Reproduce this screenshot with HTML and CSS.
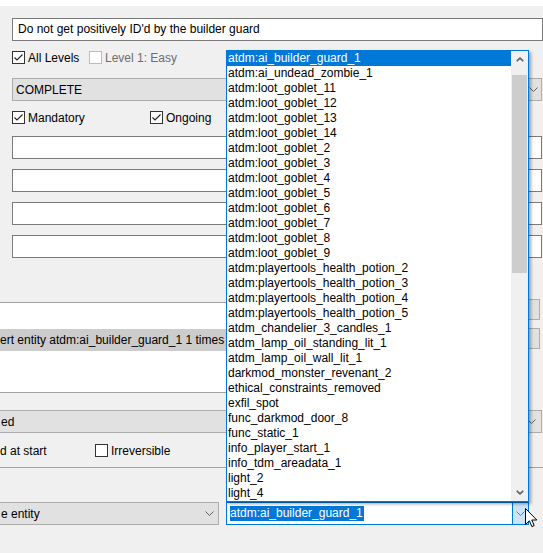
FILE: index.html
```html
<!DOCTYPE html>
<html>
<head>
<meta charset="utf-8">
<link rel="stylesheet" href="styles.css">
</head>
<body>
<div class="page">
  <div class="topbar"></div>
  <div class="upper">
    <div class="textinput">Do not get positively ID'd by the builder guard</div>
    <div class="row r1">
      <div class="chk w-all"><span class="box"><svg viewBox="0 0 13 13" width="13" height="13"><path d="M2.5 6.5 L5 9 L10.5 3.5" fill="none" stroke="#222" stroke-width="1.1"/></svg></span><span class="lbl">All Levels</span></div>
      <div class="chk disabled"><span class="box"></span><span class="lbl">Level 1: Easy</span></div>
    </div>
    <div class="combo c-complete"><span class="ctext">COMPLETE</span><svg class="chev" viewBox="0 0 9 5" width="9" height="5"><path d="M0.5 0.5 L4.5 4.5 L8.5 0.5" fill="none" stroke="#606060" stroke-width="1"/></svg></div>
    <div class="row r2">
      <div class="chk w-mand"><span class="box"><svg viewBox="0 0 13 13" width="13" height="13"><path d="M2.5 6.5 L5 9 L10.5 3.5" fill="none" stroke="#222" stroke-width="1.1"/></svg></span><span class="lbl">Mandatory</span></div>
      <div class="chk"><span class="box"><svg viewBox="0 0 13 13" width="13" height="13"><path d="M2.5 6.5 L5 9 L10.5 3.5" fill="none" stroke="#222" stroke-width="1.1"/></svg></span><span class="lbl">Ongoing</span></div>
    </div>
    <div class="fields">
      <div class="field"></div>
      <div class="field"></div>
      <div class="field"></div>
      <div class="field"></div>
    </div>
  </div>
  <div class="lower">
    <div class="listrow">
      <div class="listview">
        <div class="lv-head"></div>
        <div class="lv-row sel"><span class="lv-cell">ert entity atdm:ai_builder_guard_1 1 times</span></div>
      </div>
      <div class="sidebtns">
        <div class="sbtn"></div>
        <div class="sbtn"></div>
      </div>
    </div>
    <div class="combo c-type"><span class="ctext">ed</span><svg class="chev" viewBox="0 0 9 5" width="9" height="5"><path d="M0.5 0.5 L4.5 4.5 L8.5 0.5" fill="none" stroke="#606060" stroke-width="1"/></svg></div>
    <div class="row r3">
      <span class="lbl w-sat">d at start</span>
      <div class="chk"><span class="box"></span><span class="lbl">Irreversible</span></div>
    </div>
    <div class="sep"></div>
    <div class="row r4">
      <div class="combo c-spec"><span class="ctext">e entity</span><svg class="chev" viewBox="0 0 9 5" width="9" height="5"><path d="M0.5 0.5 L4.5 4.5 L8.5 0.5" fill="none" stroke="#606060" stroke-width="1"/></svg></div>
      <div class="editcombo">
        <span class="edtext"><span class="hl">atdm:ai_builder_guard_1</span></span>
        <span class="dbtn"><svg viewBox="0 0 9 5" width="9" height="5"><path d="M0.5 0.5 L4.5 4.5 L8.5 0.5" fill="none" stroke="#707880" stroke-width="1"/></svg></span>
      </div>
    </div>
  </div>

  <div class="droplist">
    <div class="items">
      <div class="item sel">atdm:ai_builder_guard_1</div>
      <div class="item">atdm:ai_undead_zombie_1</div>
      <div class="item">atdm:loot_goblet_11</div>
      <div class="item">atdm:loot_goblet_12</div>
      <div class="item">atdm:loot_goblet_13</div>
      <div class="item">atdm:loot_goblet_14</div>
      <div class="item">atdm:loot_goblet_2</div>
      <div class="item">atdm:loot_goblet_3</div>
      <div class="item">atdm:loot_goblet_4</div>
      <div class="item">atdm:loot_goblet_5</div>
      <div class="item">atdm:loot_goblet_6</div>
      <div class="item">atdm:loot_goblet_7</div>
      <div class="item">atdm:loot_goblet_8</div>
      <div class="item">atdm:loot_goblet_9</div>
      <div class="item">atdm:playertools_health_potion_2</div>
      <div class="item">atdm:playertools_health_potion_3</div>
      <div class="item">atdm:playertools_health_potion_4</div>
      <div class="item">atdm:playertools_health_potion_5</div>
      <div class="item">atdm_chandelier_3_candles_1</div>
      <div class="item">atdm_lamp_oil_standing_lit_1</div>
      <div class="item">atdm_lamp_oil_wall_lit_1</div>
      <div class="item">darkmod_monster_revenant_2</div>
      <div class="item">ethical_constraints_removed</div>
      <div class="item">exfil_spot</div>
      <div class="item">func_darkmod_door_8</div>
      <div class="item">func_static_1</div>
      <div class="item">info_player_start_1</div>
      <div class="item">info_tdm_areadata_1</div>
      <div class="item">light_2</div>
      <div class="item">light_4</div>
    </div>
    <div class="vscroll">
      <div class="arrow up"><svg viewBox="0 0 8 5" width="8" height="5"><path d="M0.8 4.2 L4 1.2 L7.2 4.2" fill="none" stroke="#606060" stroke-width="1.6"/></svg></div>
      <div class="track"><div class="thumb"></div></div>
      <div class="arrow down"><svg viewBox="0 0 8 5" width="8" height="5"><path d="M0.8 0.8 L4 3.8 L7.2 0.8" fill="none" stroke="#606060" stroke-width="1.6"/></svg></div>
    </div>
  </div>

  <svg class="cursor" viewBox="0 0 13 21" width="13" height="21"><path d="M0.5 0.5 L0.5 16.5 L4.4 12.8 L6.9 18.6 L9.2 17.6 L6.8 12 L11.8 12 Z" fill="#fff" stroke="#000" stroke-width="1" stroke-linejoin="miter"/></svg>
</div>
</body>
</html>
```
FILE: styles.css
```css
* { box-sizing: border-box; }
html, body { margin: 0; padding: 0; }
body {
  background: #f0f0f0;
  font-family: "Liberation Sans", Arial, sans-serif;
  font-size: 12px;
  color: #000;
}
.page {
  position: relative;
  width: 543px;
  height: 553px;
  overflow: hidden;
  background: #f0f0f0;
}
.topbar { height: 6px; background: #fff; }
.upper { padding-left: 12px; }
.textinput {
  margin-top: 12px;
  width: 531px;
  height: 23px;
  border: 1px solid #7a7a7a;
  background: #fff;
  padding-left: 5px;
  line-height: 21px;
  white-space: nowrap;
}
.row { display: flex; align-items: center; height: 13px; }
.r1 { margin-top: 10px; }
.chk { display: flex; align-items: center; height: 13px; }
.box {
  width: 13px; height: 13px;
  border: 1px solid #333;
  background: #fff;
  display: inline-flex;
  flex: none;
  position: relative;
}
.box svg { position: absolute; left: -1px; top: -1px; }
.lbl { margin-left: 3px; line-height: 14px; white-space: nowrap; }
.w-all { width: 77px; }
.disabled .box { border-color: #bcbcbc; }
.disabled .lbl { color: #6d6d6d; }
.combo {
  height: 23px;
  border: 1px solid #adadad;
  background: #e1e1e1;
  display: flex;
  align-items: center;
  justify-content: space-between;
  padding: 0 3px 0 3px;
  white-space: nowrap;
}
.combo .chev { flex: none; }
.c-complete { margin-top: 14px; width: 530px; }
.r2 { margin-top: 10px; }
.w-mand { width: 138px; }
.fields { margin-top: 12px; display: flex; flex-direction: column; gap: 10px; }
.field {
  width: 530px; height: 23px;
  border: 1px solid #7a7a7a;
  background: #fff;
}
.listrow { margin-top: 41px; display: flex; align-items: flex-start; }
.listview {
  margin-top: 3px;
  margin-left: -1px;
  width: 524px;
  height: 91px;
  background: #fff;
  border-top: 1px solid #a0a0a0;
  border-bottom: 1px solid #a0a0a0;
}
.lv-head { height: 26px; }
.lv-row { height: 22px; line-height: 22px; padding-left: 1px; white-space: nowrap; overflow: hidden; }
.lv-row.sel { background: #cccccc; }
.lv-cell { display: inline-block; vertical-align: top; }
.sidebtns { margin-left: 5px; display: flex; flex-direction: column; gap: 8px; }
.sbtn { width: 12px; height: 21px; border: 1px solid #adadad; background: #e1e1e1; }
.c-type { margin-top: 17px; margin-left: -1px; width: 543px; padding-left: 1px; padding-right: 5px; }
.r3 { margin-top: 11px; }
.w-sat { margin-left: 0; width: 95px; }
.sep { margin-top: 10px; height: 1px; background: #a0a0a0; }
.r4 { margin-top: 34px; height: 23px; align-items: stretch; }
.c-spec { margin-left: -1px; width: 220px; padding-left: 1px; padding-right: 4px; }
.editcombo {
  margin-left: 7px;
  width: 303px;
  border: 1px solid #0078d7;
  background: #fff;
  display: flex;
  align-items: center;
  justify-content: space-between;
}
.edtext { padding-left: 3px; }
.hl { background: #0078d7; color: #fff; display: inline-block; line-height: 15px; padding: 0 1px 0 0; }
.dbtn {
  width: 17px; height: 23px;
  margin: -1px -1px -1px 0;
  border: 1px solid #0078d7;
  background: #cce4f7;
  display: flex; align-items: center; justify-content: center;
}
.droplist {
  position: absolute;
  left: 226px; top: 50px;
  width: 303px; height: 452px;
  border: 1px solid #0078d7;
  background: #fff;
  display: flex;
  box-shadow: 2px 2px 3px rgba(0,0,0,0.35);
  z-index: 5;
}
.items { flex: 1; }
.item { height: 15px; line-height: 15px; padding-left: 1px; white-space: nowrap; overflow: hidden; }
.item.sel { background: #0078d7; color: #fff; }
.vscroll { width: 17px; background: #f0f0f0; display: flex; flex-direction: column; }
.arrow { height: 17px; display: flex; align-items: center; justify-content: center; flex: none; }
.track { flex: 1; padding: 7px 1px 0 1px; }
.thumb { height: 198px; background: #cdcdcd; }
.cursor { position: absolute; left: 525px; top: 508px; z-index: 10; }
```
